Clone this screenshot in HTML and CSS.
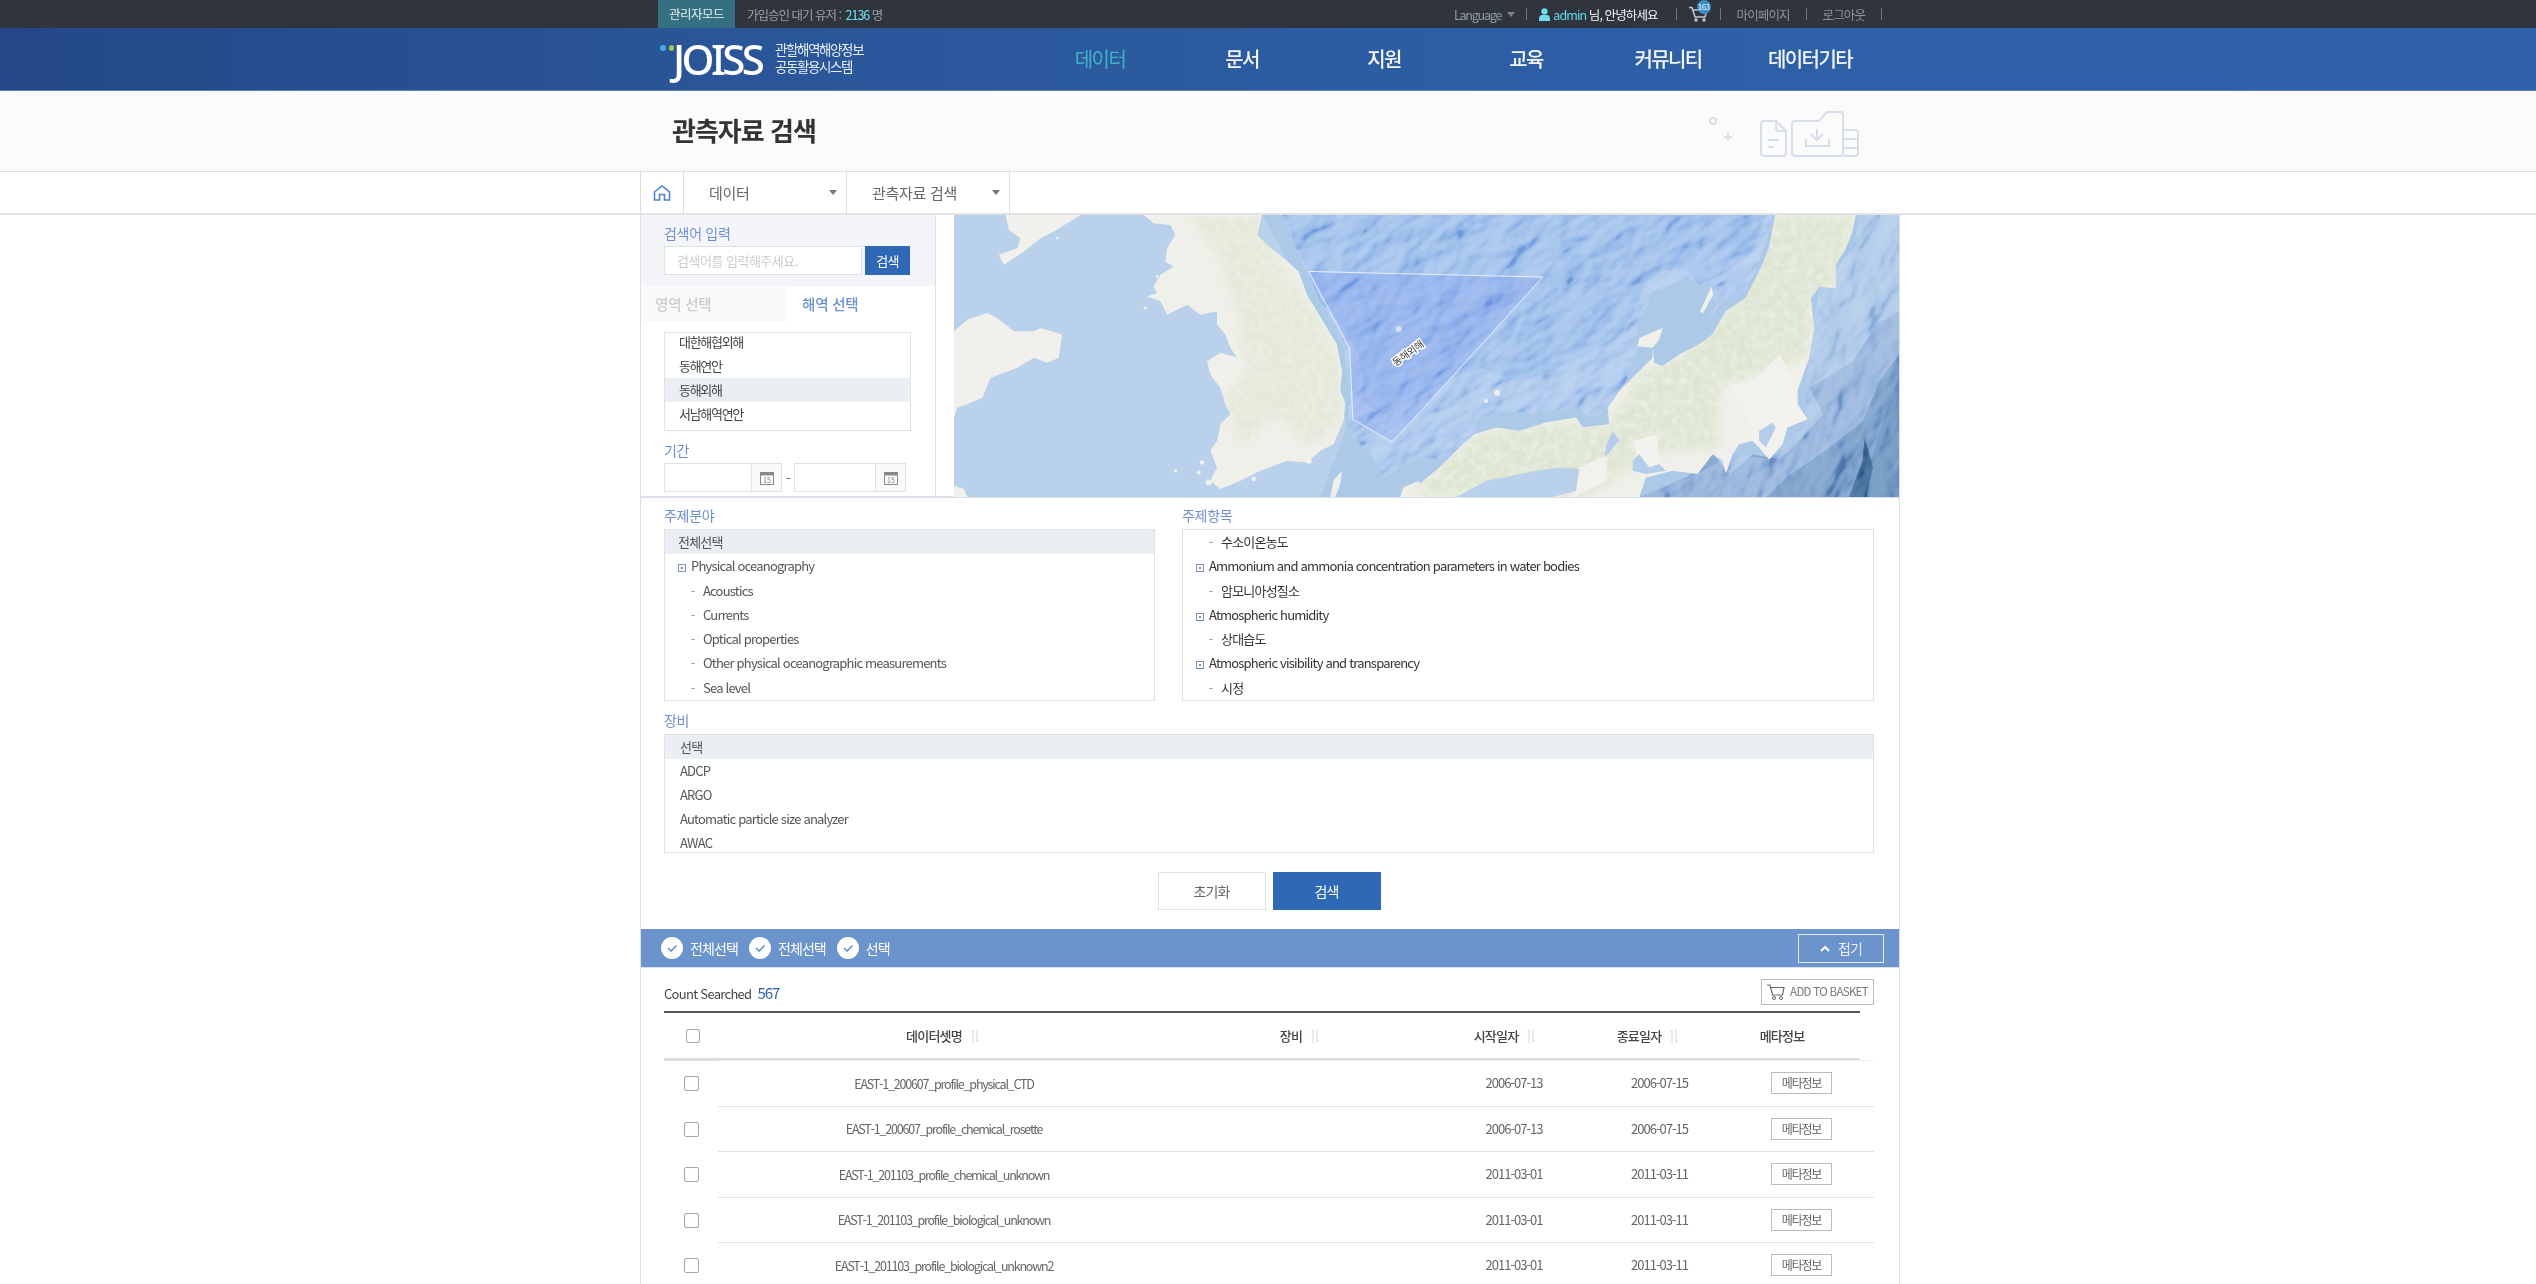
FILE: index.html
```html
<!DOCTYPE html>
<html lang="ko">
<head>
<meta charset="utf-8">
<title>관측자료 검색 - JOISS</title>
<link rel="stylesheet" href="styles.css">
</head>
<body>
<div class="topbar"><div class="wrap top-inner">
  <a class="mode">관리자모드</a>
  <span class="wait">가입승인 대기 유저 : <b>2136</b> 명</span>
  <div class="top-right">
    <span class="lang">Language<i class="caret"></i></span><i class="sep"></i>
    <svg class="user-ic" viewBox="0 0 12 14"><circle cx="6" cy="3.6" r="3.4"/><path d="M0 14V11.5Q0 8 3.5 7.6H8.500Q12 8 12 11.500V14Z"/></svg>
    <span class="hello"><em>admin</em> 님, 안녕하세요</span><i class="sep s2"></i>
    <span class="cart"><svg viewBox="0 0 19 16"><path d="M0 1.500H3L6 11H16L18 4H4" fill="none" stroke="#c4c8cc" stroke-width="1.500"/><circle cx="7" cy="14" r="1.700" fill="#c4c8cc"/><circle cx="15" cy="14" r="1.700" fill="#c4c8cc"/></svg><u>163</u></span><i class="sep s3"></i>
    <a>마이페이지</a><i class="sep s4"></i>
    <a>로그아웃</a><i class="sep s4"></i>
  </div>
</div></div>

<header class="gnb"><div class="wrap gnb-inner">
  <a class="logo">
    <span class="dots"><i></i><i></i></span>
    <span class="mark">JOISS</span>
    <span class="sub">관할해역해양정보<br>공동활용시스템</span>
  </a>
  <nav class="menu">
    <a class="on">데이터</a><a>문서</a><a>지원</a><a>교육</a><a>커뮤니티</a><a>데이터기타</a>
  </nav>
</div></header>

<section class="title-band"><div class="wrap title-inner">
  <h1>관측자료 검색</h1>
  <svg class="title-art" viewBox="0 0 180 70"><circle cx="13" cy="21" r="3"/><path d="M24 37H32M28 33V41"/><path d="M64 21H76L86 31V53a3 3 0 0 1-3 3H64a3 3 0 0 1-3-3V24a3 3 0 0 1 3-3Z"/><path d="M76 21V28a3 3 0 0 0 3 3H86M68 40H79M68 47H74"/><path d="M95 21H119L127 12H140a3 3 0 0 1 3 3V53a3 3 0 0 1-3 3H95a3 3 0 0 1-3-3V24a3 3 0 0 1 3-3Z"/><path d="M117 29V39M111 34L117 40L123 34M106 39V46H129V39"/><path d="M143 30H155a3 3 0 0 1 3 3V53a3 3 0 0 1-3 3H143M143 39H158M143 48H158"/></svg>
</div></section>

<div class="crumbs"><div class="wrap crumb-inner">
  <a class="home"><svg viewBox="0 0 17 16"><path d="M1 7L8.500 1L16 7V15H11V9.500H6V15H1Z" fill="none" stroke="#4f84c9" stroke-width="1.600"/></svg></a>
  <a class="crumb">데이터<i class="caret dark"></i></a>
  <a class="crumb">관측자료 검색<i class="caret dark"></i></a>
</div></div>

<main class="wrap page">
  <section class="top-search">
    <aside class="side">
      <div class="kw">
        <label class="lbl">검색어 입력</label>
        <div class="kw-row"><span class="kw-input">검색어를 입력해주세요.</span><button class="kw-btn">검색</button></div>
      </div>
      <div class="tabs"><a class="tab">영역 선택</a><a class="tab on">해역 선택</a></div>
      <ul class="sea-list">
        <li>대한해협외해</li><li>동해연안</li><li class="sel">동해외해</li><li>서남해역연안</li>
      </ul>
      <label class="lbl period">기간</label>
      <div class="dates">
        <span class="date"><span class="date-field"></span><span class="date-ic"><svg viewBox="0 0 14 14"><rect x="0.500" y="1.500" width="13" height="12" fill="#fff" stroke="#8a8a8a"/><rect x="0.500" y="1.500" width="13" height="3" fill="#8a8a8a"/><text x="7" y="12" class="cal-num">15</text></svg></span></span>
        <span class="dash">-</span>
        <span class="date"><span class="date-field"></span><span class="date-ic"><svg viewBox="0 0 14 14"><rect x="0.500" y="1.500" width="13" height="12" fill="#fff" stroke="#8a8a8a"/><rect x="0.500" y="1.500" width="13" height="3" fill="#8a8a8a"/><text x="7" y="12" class="cal-num">15</text></svg></span></span>
      </div>
    </aside>
    <div class="map">
      <svg viewBox="0 0 2838 849" preserveAspectRatio="none">
        <defs>
          <path id="land" d="M570 0L600 25L650 30L665 60L640 100L635 140L660 155L620 180L600 215L610 235L580 245L620 260L640 300L700 270L740 300L790 290L790 330L815 360L830 400L850 430L800 415L760 440L770 480L800 520L815 570L830 600L800 630L790 680L770 710L790 760L770 800L800 825L860 800L920 770L1000 740L1060 745L1100 710L1140 690L1170 620L1175 565L1160 530L1165 470L1150 390L1120 340L1090 290L1060 240L1035 170L990 130L940 90L910 60L925 0Z
          M0 350L40 315L100 295L130 310L180 350L240 350L260 340L325 360L315 430L280 445L240 430L190 460L110 490L85 550L40 570L10 580L0 610Z
          M155 0L380 0L300 50L260 70L210 110L150 150L135 120L190 100L200 70L165 45Z
          M0 815L30 825L40 849L0 849Z
          M1130 849L1140 800L1165 770L1160 810L1145 849Z
          M1398 810L1458 760L1528 690L1563 660L1628 640L1698 650L1778 625L1868 610L1888 640L1968 630L1963 580L1998 530L2058 470L2098 430L2098 400L2053 395L2058 370L2128 340L2118 375L2098 400L2103 445L2128 455L2178 420L2238 390L2278 360L2318 290L2378 250L2398 210L2428 150L2448 100L2466 0L2708 0L2698 50L2678 100L2648 150L2648 220L2598 215L2573 250L2583 340L2568 430L2533 530L2533 570L2563 615L2503 640L2488 690L2448 735L2418 700L2398 680L2358 690L2338 720L2318 780L2308 740L2278 720L2233 780L2158 770L2078 790L2058 849L1340 849L1350 820L1398 800Z
          M2240 290L2275 215L2280 240L2250 295Z
          M1622 535a9 9 0 1 0 18 0a9 9 0 1 0 -18 0Z
          M1592 560a6 6 0 1 0 12 0a6 6 0 1 0 -12 0Z"/>
          <clipPath id="landClip"><use href="#land"/></clipPath>
          <clipPath id="reliefClip"><path d="M985 0L1040 130L1110 270L1170 400L1190 550L1180 650L1250 720L1290 790L1398 730L1458 735L1550 690L1585 610L1640 590L1730 600L1800 590L1880 580L1900 610L1940 600L1968 570L2018 500L2058 400L2048 340L2098 240L2198 190L2268 210L2288 270L2258 330L2298 270L2378 230L2408 170L2438 80L2458 0Z"/></clipPath>
          <clipPath id="pacClip"><path d="M2720 0L2838 0L2838 849L2058 849L2233 780L2338 720L2450 735L2560 620L2560 430L2600 220L2700 100Z"/></clipPath>
          <linearGradient id="pac" x1="0" y1="0" x2="1" y2="1"><stop offset="0" stop-color="#b2cdec"/><stop offset="1" stop-color="#9fbde2"/></linearGradient>
          <filter id="hill" x="0" y="0" width="100%" height="100%"><feTurbulence type="fractalNoise" baseFrequency="0.0075 0.012" numOctaves="3" seed="23"/><feGaussianBlur stdDeviation="2"/><feDiffuseLighting surfaceScale="30" diffuseConstant="1.100" lighting-color="#fff"><feDistantLight azimuth="250" elevation="38"/></feDiffuseLighting></filter>
          <filter id="mottle" x="0" y="0" width="100%" height="100%"><feTurbulence type="fractalNoise" baseFrequency="0.045" numOctaves="5" seed="4"/><feColorMatrix type="matrix" values="0 0 0 0 .84  0 0 0 0 .88  0 0 0 0 .78  1.800 0 0 0 -.620"/></filter>
          <filter id="soft"><feGaussianBlur stdDeviation="14"/></filter>
        </defs>
        <rect width="2838" height="849" fill="#b9d1ea"/>
        <path d="M925 0L1060 240L1140 460L1180 640L1100 849L2838 849L2838 0Z" fill="#adc9e8"/>
        <path d="M2700 0L2838 0L2838 849L2060 849L2240 780L2340 720L2450 735L2560 620L2560 430L2600 220Z" fill="url(#pac)"/>
        <path d="M2838 290L2770 330L2700 440L2570 520L2610 600L2530 690L2440 770L2360 849L2838 849Z" fill="#8eaed9"/>
        <path d="M2838 420L2780 500L2730 620L2630 700L2500 790L2440 849L2838 849Z" fill="#6f96c4"/>
        <path d="M2838 480L2790 620L2760 720L2700 849L2838 849Z" fill="#5f89b8"/>
        <path d="M2735 670L2728 740L2688 849L2740 849L2760 760Z" fill="#33608f"/>
        <path d="M2060 849L2200 790L2280 720L2330 780L2400 720L2500 740L2400 849Z" fill="#8aaad6"/>
        <path d="M985 0L1040 130L1110 270L1170 400L1190 550L1180 650L1250 720L1290 790L1398 730L1458 735L1550 690L1585 610L1640 590L1730 600L1800 590L1880 580L1900 610L1940 600L1968 570L2018 500L2058 400L2048 340L2098 240L2198 190L2268 210L2288 270L2258 330L2298 270L2378 230L2408 170L2438 80L2458 0Z" fill="#a2c1ea"/>
        <path d="M990 0L1040 120L1100 260L1170 340L1215 420L1230 500L1225 560L1290 600L1398 545L1480 500L1580 460L1690 500L1800 470L1900 420L1990 370L2040 300L2080 200L2120 170L2198 160L2240 210L2320 170L2400 110L2440 0Z" fill="#93b7e8"/>
        <g class="relief" clip-path="url(#reliefClip)"><rect transform="rotate(-35 1700 420)" x="700" y="-700" width="2100" height="2300" filter="url(#hill)"/></g>
        <g class="relief relief-pac" clip-path="url(#pacClip)"><rect transform="rotate(-60 2500 420)" x="1800" y="-400" width="1500" height="1700" filter="url(#hill)"/></g>
        <use href="#land" fill="#f1f0ec"/>
        <g clip-path="url(#landClip)">
          <g filter="url(#soft)" fill="#dfe5d3">
            <path d="M1398 849L1398 810L1563 660L1778 625L1968 630L2058 470L2178 420L2318 290L2466 0L2708 0L2648 220L2573 250L2583 340L2568 430L2300 520L2300 700L2100 720L1900 849Z"/>
            <path d="M700 0L920 0L960 120L1100 300L1165 470L1170 620L1060 700L960 600L860 700L810 560L880 470L850 300L800 140Z" opacity=".7"/>
          </g>
          <rect class="mottle" x="600" width="2238" height="849" filter="url(#mottle)"/>
          <path d="M2330 510L2400 500L2480 420L2533 530L2563 615L2503 640L2488 690L2448 735L2400 680L2380 600Z" fill="#f2f1ed"/>
          <path d="M2040 680L2110 660L2120 760L2060 780Z" fill="#f2f1ed"/>
          <path d="M1860 770L1960 720L1960 800L1860 849Z" fill="#f2f1ed"/>
        </g>
        <path d="M1508 849L1600 800L1748 770L1818 760L1878 765L1868 830L1798 849Z" fill="#b9d1ea"/>
        <path d="M2038 740L2058 720L2088 760L2118 750L2138 770L2078 780L2038 770Z" fill="#b4cdea"/>
        <path d="M1978 650L1998 680L1953 730L1960 690Z" fill="#b4cdea"/>
        <path d="M2418 650L2458 625L2468 640L2438 700L2418 680Z" fill="#b4cdea"/>
        <circle cx="1335" cy="343" r="9" fill="#f5f5f0"/>
        <g fill="#f1f0ec"><circle cx="745" cy="745" r="7"/><circle cx="735" cy="775" r="6"/><circle cx="665" cy="770" r="5"/><circle cx="765" cy="805" r="9"/><circle cx="575" cy="280" r="5"/><circle cx="610" cy="185" r="4"/><circle cx="900" cy="795" r="7"/><circle cx="1065" cy="740" r="9"/><circle cx="310" cy="70" r="4"/></g>
        <path class="area" d="M1065 170L1768 187L1398 595L1315 683L1198 615L1188 400Z"/>
        <text class="map-label" transform="translate(1370 425) rotate(-36)">동해외해</text>
      </svg>
    </div>
  </section>

  <section class="filters">
    <div class="subject">
      <div class="col">
        <label class="lbl">주제분야</label>
        <ul class="box tree">
          <li class="sel">전체선택</li>
          <li class="parent"><i class="plus"></i>Physical oceanography</li>
          <li class="leaf">Acoustics</li>
          <li class="leaf">Currents</li>
          <li class="leaf">Optical properties</li>
          <li class="leaf">Other physical oceanographic measurements</li>
          <li class="leaf">Sea level</li>
        </ul>
      </div>
      <div class="col wide">
        <label class="lbl">주제항목</label>
        <ul class="box tree dark">
          <li class="leaf">수소이온농도</li>
          <li class="parent"><i class="plus"></i>Ammonium and ammonia concentration parameters in water bodies</li>
          <li class="leaf">암모니아성질소</li>
          <li class="parent"><i class="plus"></i>Atmospheric humidity</li>
          <li class="leaf">상대습도</li>
          <li class="parent"><i class="plus"></i>Atmospheric visibility and transparency</li>
          <li class="leaf">시정</li>
        </ul>
      </div>
    </div>
    <label class="lbl equip-lbl">장비</label>
    <ul class="box equip">
      <li class="sel">선택</li><li>ADCP</li><li>ARGO</li><li>Automatic particle size analyzer</li><li>AWAC</li>
    </ul>
    <div class="actions"><button class="btn">초기화</button><button class="btn primary">검색</button></div>
  </section>

  <div class="bar">
    <span class="chk"><svg viewBox="0 0 22 22"><circle cx="11" cy="11" r="11" fill="#fff"/><path d="M7 11L10 14L15.500 8.500" fill="none" stroke="#6c94cc" stroke-width="1.600"/></svg>전체선택</span>
    <span class="chk"><svg viewBox="0 0 22 22"><circle cx="11" cy="11" r="11" fill="#fff"/><path d="M7 11L10 14L15.500 8.500" fill="none" stroke="#6c94cc" stroke-width="1.600"/></svg>전체선택</span>
    <span class="chk"><svg viewBox="0 0 22 22"><circle cx="11" cy="11" r="11" fill="#fff"/><path d="M7 11L10 14L15.500 8.500" fill="none" stroke="#6c94cc" stroke-width="1.600"/></svg>선택</span>
    <button class="fold"><svg viewBox="0 0 10 7"><path d="M1 6L5 2L9 6" fill="none" stroke="#fff" stroke-width="2"/></svg>접기</button>
  </div>

  <div class="count-row">
    <span class="count">Count Searched <b>567</b></span>
    <button class="basket"><svg viewBox="0 0 18 16"><path d="M0 1H3L5.500 11H15.500L17 3.500H3.600" fill="none" stroke="#666" stroke-width="1.200"/><circle cx="7" cy="14" r="1.500" fill="none" stroke="#666"/><circle cx="14" cy="14" r="1.500" fill="none" stroke="#666"/></svg>ADD TO BASKET</button>
  </div>

  <div class="table">
    <div class="thead">
      <span class="c-check"><i class="cb head-cb"></i></span>
      <span class="h-name">데이터셋명<svg class="sort" viewBox="0 0 10 14"><path d="M3 14V1M1 3.500L3 1M7 0V13M9 10.500L7 13"/></svg></span>
      <span class="h-equip">장비<svg class="sort" viewBox="0 0 10 14"><path d="M3 14V1M1 3.500L3 1M7 0V13M9 10.500L7 13"/></svg></span>
      <span class="h-start">시작일자<svg class="sort" viewBox="0 0 10 14"><path d="M3 14V1M1 3.500L3 1M7 0V13M9 10.500L7 13"/></svg></span>
      <span class="h-end">종료일자<svg class="sort" viewBox="0 0 10 14"><path d="M3 14V1M1 3.500L3 1M7 0V13M9 10.500L7 13"/></svg></span>
      <span class="h-meta">메타정보</span>
    </div>
    <div class="trow"><span class="c-check"><i class="cb"></i></span><div class="cells"><span class="d-name">EAST-1_200607_profile_physical_CTD</span><span></span><span class="d-date">2006-07-13</span><span class="d-date">2006-07-15</span><span class="d-meta"><a class="meta">메타정보</a></span></div></div>
    <div class="trow"><span class="c-check"><i class="cb"></i></span><div class="cells"><span class="d-name">EAST-1_200607_profile_chemical_rosette</span><span></span><span class="d-date">2006-07-13</span><span class="d-date">2006-07-15</span><span class="d-meta"><a class="meta">메타정보</a></span></div></div>
    <div class="trow"><span class="c-check"><i class="cb"></i></span><div class="cells"><span class="d-name">EAST-1_201103_profile_chemical_unknown</span><span></span><span class="d-date">2011-03-01</span><span class="d-date">2011-03-11</span><span class="d-meta"><a class="meta">메타정보</a></span></div></div>
    <div class="trow"><span class="c-check"><i class="cb"></i></span><div class="cells"><span class="d-name">EAST-1_201103_profile_biological_unknown</span><span></span><span class="d-date">2011-03-01</span><span class="d-date">2011-03-11</span><span class="d-meta"><a class="meta">메타정보</a></span></div></div>
    <div class="trow"><span class="c-check"><i class="cb"></i></span><div class="cells"><span class="d-name">EAST-1_201103_profile_biological_unknown2</span><span></span><span class="d-date">2011-03-01</span><span class="d-date">2011-03-11</span><span class="d-meta"><a class="meta">메타정보</a></span></div></div>
  </div>
</main>
</body>
</html>
```

FILE: styles.css
```css
* { box-sizing: border-box; }
html, body { margin: 0; padding: 0; height: 1284px; overflow: hidden; background: #fff; }
body { font: 13px/1.2 "Noto Sans CJK KR", "Noto Sans", sans-serif; color: #555; letter-spacing: -0.8px; }
ul { list-style: none; margin: 0; padding: 0; }
i, em { font-style: normal; }
button { font: inherit; letter-spacing: inherit; cursor: pointer; padding: 0; }
svg { display: block; }
.wrap { width: 1260px; margin-left: 640px; }

/* top bar */
.topbar { height: 28px; background: #30343c; color: #9aa0a4; font-size: 12.5px; }
.top-inner { display: flex; align-items: center; height: 28px; }
.mode { margin-left: 18px; width: 77px; height: 28px; line-height: 28px; text-align: center; background: #34707f; color: #e6f2f4; letter-spacing: -0.5px; }
.wait { margin-left: 12px; letter-spacing: -1px; }
.wait b { font-weight: 400; color: #68e3f2; margin-left: 2px; }
.top-right { margin-left: auto; padding-right: 18px; display: flex; align-items: center; }
.lang { display: flex; align-items: center; color: #8d9ba3; letter-spacing: -1.2px; }
.caret { display: inline-block; width: 0; height: 0; margin-left: 6px; border: 4.5px solid transparent; border-top: 5px solid #7a8086; border-bottom: 0; }
.sep { display: block; width: 1px; height: 12px; background: #70767c; margin-left: 11px; }
.user-ic { width: 11px; height: 13px; fill: #6fdcf0; margin-left: 12px; }
.hello { margin-left: 3px; color: #f2f4f5; letter-spacing: -0.9px; }
.hello em { color: #5fdcee; }
.s2 { margin-left: 18px; }
.cart { position: relative; margin-left: 12px; width: 19px; height: 16px; }
.cart u { position: absolute; left: 8px; top: -6px; width: 14px; height: 14px; border-radius: 50%; background: #3b8fc2; color: #fff; font-size: 8px; line-height: 13px; text-align: center; text-decoration: none; letter-spacing: -0.6px; }
.s3 { margin-left: 12px; margin-right: 16px; }
.top-right a { color: #8f959a; letter-spacing: -0.9px; }
.s4 { margin-left: 16px; margin-right: 16px; }
.s4:last-child { margin-right: 0; }

/* main nav */
.gnb { height: 63px; background: linear-gradient(90deg, #244887 0%, #2a5699 30%, #2e60a8 70%, #2f62ab 100%); border-bottom: 1px solid #5b84bd; }
.gnb-inner { display: flex; height: 62px; }
.logo { width: 389px; padding-left: 20px; display: flex; color: #fff; }
.dots { display: flex; gap: 3px; margin-top: 17px; height: 6px; width: 14px; }
.dots i { width: 6px; height: 6px; border-radius: 50%; background: #4aa5e8; }
.dots i + i { background: #9ccb48; }
.mark { font: 500 42px/62px "Noto Sans", sans-serif; letter-spacing: -3.6px; width: 102px; margin-left: -1px; }
.sub { font-size: 13.5px; line-height: 17px; padding-top: 13px; letter-spacing: -1.4px; color: #e8edf5; }
.menu { display: grid; grid-template-columns: repeat(6, 142px); }
.menu a { text-align: center; line-height: 62px; font-size: 20px; font-weight: 500; color: #f4f6f9; letter-spacing: -1.6px; }
.menu a.on { color: #41b3c6; font-weight: 400; }

/* title band */
.title-band { height: 81px; background: #fbfbfb; border-bottom: 1px solid #ddd; }
.title-inner { display: flex; position: relative; height: 80px; }
h1 { margin: 21px 0 0 32px; font-size: 26px; line-height: 36px; font-weight: 700; color: #333; letter-spacing: -1px; }
.title-art { width: 180px; height: 70px; margin: 9px 20px 0 auto; fill: none; stroke: #d6deea; stroke-width: 2; }

/* breadcrumbs */
.crumbs { height: 43px; border-bottom: 2px solid #e2e2e2; }
.crumb-inner { display: flex; height: 41px; border-left: 1px solid #ddd; }
.home { width: 43px; border-right: 1px solid #ddd; display: flex; align-items: center; justify-content: center; }
.home svg { width: 18px; height: 16px; }
.crumb { width: 163px; border-right: 1px solid #ddd; display: flex; align-items: center; padding-left: 25px; font-size: 15px; color: #666; letter-spacing: -0.3px; position: relative; }
.caret.dark { position: absolute; right: 9px; top: 18px; border-top-color: #777; margin: 0; }

/* page */
.page { border-left: 1px solid #dcdfe6; border-right: 1px solid #dcdfe6; height: 1070px; }
.top-search { display: flex; height: 283px; border-bottom: 2px solid #dde0e8; }
.side { width: 295px; border-right: 1px solid #dde0e8; flex: none; }
.map { flex: 1; margin-left: 18px; margin-bottom: -1px; overflow: hidden; }
.map svg { width: 100%; height: 100%; }
.relief { mix-blend-mode: soft-light; opacity: .6; }
.relief-pac { opacity: .5; }
.mottle { opacity: .9; }
.area { fill: rgba(108, 134, 244, .2); stroke: #eaf0fb; stroke-width: 3; }
.map-label { font-size: 30px; fill: #333; stroke: #fff; stroke-width: 9px; paint-order: stroke; text-anchor: middle; letter-spacing: -1px; }
.lbl { display: block; color: #6e90d0; font-size: 14px; line-height: 18px; letter-spacing: -0.3px; }
.kw { height: 71px; background: #f3f5f8; padding: 9px 0 0 23px; }
.kw-row { display: flex; margin-top: 4px; }
.kw-input { width: 198px; height: 29px; border: 1px solid #dfe1e4; background: #fff; padding-left: 12px; line-height: 27px; color: #ccc; letter-spacing: -0.5px; }
.kw-btn { margin-left: 3px; width: 45px; height: 29px; border: 0; background: #2f69b5; color: #fff; }
.tabs { display: flex; height: 36px; }
.tab { width: 146px; background: #fafafa; color: #ccc; font-size: 14.5px; font-weight: 500; padding-left: 14px; line-height: 35px; letter-spacing: -0.2px; }
.tab.on { background: #fff; color: #6e90d0; padding-left: 15px; }
.sea-list { margin: 10px 0 0 23px; width: 247px; height: 99px; border: 1px solid #dfe1e4; overflow: hidden; color: #444; letter-spacing: -1.3px; }
.sea-list li { height: 24px; line-height: 24px; padding-left: 14px; }
.sea-list li:first-child { margin-top: -3px; }
.sel { background: #ebeef3; }
.period { margin: 10px 0 0 23px; }
.dates { display: flex; align-items: center; margin: 4px 0 0 23px; }
.date { display: flex; border: 1px solid #dfe1e4; height: 29px; width: 118px; }
.date + .dash + .date { width: 112px; }
.date-field { flex: 1; background: #fff; }
.date-ic { width: 30px; border-left: 1px solid #dfe1e4; background: #fafafa; display: flex; align-items: center; justify-content: center; }
.date-ic svg { width: 14px; height: 14px; }
.cal-num { font-size: 7px; text-anchor: middle; fill: #777; letter-spacing: 0; }
.dash { width: 12px; text-align: center; }

.filters { padding: 8px 25px 0 23px; }
.subject { display: flex; gap: 27px; }
.col { width: 491px; }
.col.wide { width: 692px; }
.box { border: 1px solid #dfe1e4; overflow: hidden; margin-top: 5px; }
.tree { height: 172px; }
.tree li { height: 24.300px; line-height: 24.300px; padding-left: 13px; }
.tree.dark { color: #333; }
.plus { display: inline-block; vertical-align: -1px; width: 8px; height: 8px; border: 1px solid #7e93bb; margin-right: 5px; position: relative; }
.plus::after { content: ""; position: absolute; left: 2px; top: 2px; width: 2px; height: 2px; background: #7e93bb; }
.tree .leaf { padding-left: 26px; }
.tree .leaf::before { content: ""; display: inline-block; vertical-align: 4px; width: 4px; height: 1px; background: #aaa; margin-right: 8px; }
.equip-lbl { margin-top: 10px; }
.equip { height: 119px; }
.equip li { height: 24px; line-height: 24px; padding-left: 15px; }
.actions { display: flex; justify-content: center; gap: 7px; margin-top: 19px; }
.btn { width: 108px; height: 38px; border: 1px solid #dfe1e4; background: #fff; color: #666; font-size: 14px; }
.btn.primary { border: 0; background: #2f69b5; color: #fff; }

.bar { display: flex; align-items: center; height: 39px; margin-top: 19px; background: #6c94cc; border-bottom: 1px solid #d5dfee; padding-left: 20px; color: #fff; font-size: 14px; letter-spacing: -0.9px; }
.chk { display: flex; align-items: center; margin-right: 11px; }
.chk svg { width: 22px; height: 22px; margin-right: 7px; }
.fold { margin-left: auto; margin-right: 15px; width: 86px; height: 29px; border: 1px solid #e3eaf6; background: transparent; color: #e8eff9; display: flex; align-items: center; justify-content: center; font-size: 14px; }
.fold svg { width: 10px; height: 7px; margin-right: 8px; }

.count-row { display: flex; align-items: center; justify-content: space-between; height: 43px; padding: 0 25px 0 23px; }
.count { color: #444; margin-top: 6px; letter-spacing: -0.7px; }
.count b { font-size: 15px; font-weight: 400; color: #2f5fa8; margin-left: 3px; letter-spacing: -1px; }
.basket { display: flex; align-items: center; justify-content: center; width: 113px; height: 26px; border: 1px solid #b8bcc2; background: #fff; color: #777; font-size: 11.5px; letter-spacing: -0.7px; margin-top: 4px; }
.basket svg { width: 18px; height: 16px; margin-right: 5px; }

.table { margin: 0 25px 0 23px; }
.thead { display: grid; grid-template-columns: 54px 450px 264px 146px 140px 128px; width: 1196px; height: 50px; padding-top: 1px; border-top: 2px solid #555; border-bottom: 3px solid #ddd; align-items: center; text-align: center; color: #444; font-weight: 500; }
.thead > span { display: flex; align-items: center; justify-content: center; }
.thead > .c-check { justify-content: flex-start; }
.sort { width: 10px; height: 14px; margin-left: 8px; fill: none; stroke: #d8d8d8; stroke-width: 1; }
.cb { display: block; width: 15px; height: 15px; border: 1px solid #a8a8a8; border-radius: 2px; background: #fff; box-shadow: inset 0 0 1px #ccc; }
.head-cb { margin-left: 22px; width: 14px; height: 14px; }
.trow { display: flex; height: 45.500px; }
.trow .c-check { width: 54px; padding: 15px 0 0 20px; flex: none; }
.cells { flex: 1; display: grid; grid-template-columns: 452px 260px 168px 123px 153px; align-items: center; border-bottom: 1px solid #e3e3e8; text-align: center; color: #666; font-size: 12.500px; letter-spacing: -1.2px; }
.thead + .trow .cells { box-shadow: 0 -1px 0 #eee; }
.d-date { font-size: 13px; letter-spacing: -1px; }
.d-meta { padding-left: 8px; }
.meta { display: block; width: 61px; height: 22px; margin: 0 auto; border: 1px solid #bcbcbc; line-height: 20px; font-size: 12px; }
```
